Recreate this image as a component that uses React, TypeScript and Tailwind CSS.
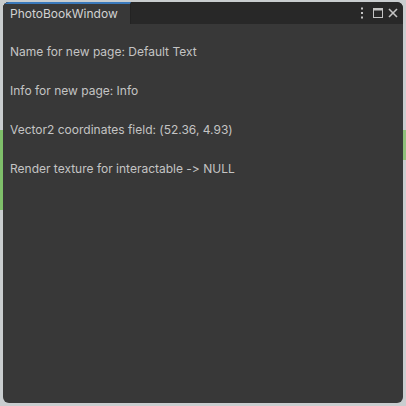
import React from 'react';

const lines = [
    'Name for new page: Default Text',
    'Info for new page: Info',
    'Vector2 coordinates field: (52.36, 4.93)',
    'Render texture for interactable -> NULL',
];

const App = () => {
    return (
        <div className="relative w-[406px] h-[406px] bg-[#c9cdcf] p-[3px] pt-[2px] overflow-hidden [font-feature-settings:'calt'_0,'liga'_0]" style={{ fontFamily: 'Inter, "Noto Sans", sans-serif' }}>
            {/* scene behind the window */}
            <div className="absolute left-0 top-[130px] w-[3px] h-[80px] bg-[#7fbf6a]"></div>
            <div className="absolute right-0 top-[130px] w-[3px] h-[30px] bg-[#8fc07c]"></div>

            <div className="relative flex flex-col w-full h-full rounded-[6px] overflow-hidden bg-[#383838]">
                {/* title bar */}
                <div className="flex items-stretch h-[22px] bg-[#282828]">
                    <div className="flex items-center w-[128px] bg-[#383838] border-t-2 border-[#3a79bb] border-r border-r-[#232323] pl-[7px] text-[12px] text-[#d2d2d2]">
                        PhotoBookWindow
                    </div>
                    <div className="flex-1"></div>
                    <div className="flex items-center pr-[4px] text-[#c4c4c4]">
                        <svg width="4" height="12" viewBox="0 0 4 12" fill="currentColor" className="mr-[8px]">
                            <rect x="1" y="0.5" width="2" height="2" />
                            <rect x="1" y="5" width="2" height="2" />
                            <rect x="1" y="9.5" width="2" height="2" />
                        </svg>
                        <svg width="12" height="12" viewBox="0 0 12 12" fill="none" stroke="currentColor" className="mr-[3px]">
                            <rect x="1.5" y="1.5" width="9" height="9" />
                            <line x1="1.5" y1="2.5" x2="10.5" y2="2.5" strokeWidth="2" />
                        </svg>
                        <svg width="12" height="12" viewBox="0 0 12 12" fill="none" stroke="currentColor" strokeWidth="1.6">
                            <line x1="2" y1="2" x2="10" y2="10" />
                            <line x1="10" y1="2" x2="2" y2="10" />
                        </svg>
                    </div>
                </div>

                {/* content */}
                <div className="flex flex-col gap-[24px] pt-[20px] pl-[7px] text-[12px] leading-[15px] text-[#c4c4c4]">
                    {lines.map((l) => (
                        <div key={l}>{l}</div>
                    ))}
                </div>
            </div>
        </div>
    );
};

export default App;
